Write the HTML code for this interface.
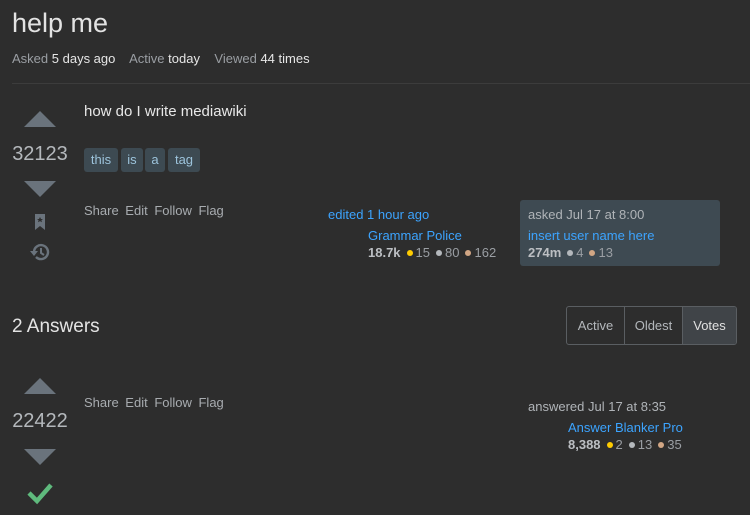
<!DOCTYPE html>
<html><head><style>
body{margin:0;width:750px;height:515px;background:#2d2d2d;font-family:"Liberation Sans",sans-serif;position:relative;overflow:hidden;color:#e8e8e8}
.a{position:absolute;white-space:nowrap}
.up{width:0;height:0;border-left:16px solid transparent;border-right:16px solid transparent;border-bottom:16px solid #6a737c}
.dn{width:0;height:0;border-left:16px solid transparent;border-right:16px solid transparent;border-top:16px solid #6a737c}
.num{font-size:20px;color:#b4b8bc;width:80px;text-align:center}
.g{color:#9a9ea3}
.l{color:#3ca4ff}
.tag{position:absolute;top:148px;height:24px;line-height:24px;background:#3d4a52;color:#9cc3db;font-size:13px;text-align:center;border-radius:3px}
.act{font-size:13px;color:#a8acb0;word-spacing:3px}
.rep{font-size:13px;color:#9a9ea3}
.rep b{color:#bcbfc3}
.d{display:inline-block;width:6px;height:6px;border-radius:50%;margin:0 3px 1px 6px}
</style></head><body>
<div class="a" style="left:12px;top:8px;font-size:27px;color:#e3e3e3">help me</div>
<div class="a" style="left:12px;top:51px;font-size:13px"><span class="g">Asked</span> <span style="color:#e6e6e6">5 days ago</span>&nbsp;&nbsp;&nbsp; <span class="g">Active</span> <span style="color:#e6e6e6">today</span>&nbsp;&nbsp;&nbsp; <span class="g">Viewed</span> <span style="color:#e6e6e6">44 times</span></div>
<div class="a" style="left:12px;top:83px;width:738px;height:1px;background:#3c3c3c"></div>

<div class="a up" style="left:24px;top:111px"></div>
<div class="a num" style="left:0;top:143px">32123</div>
<div class="a dn" style="left:24px;top:181px"></div>
<svg class="a" style="left:33px;top:213px" width="14" height="18" viewBox="0 0 14 18"><path d="M2 1h10v16l-5-4-5 4z" fill="#6a737c"/><path d="M7 4l1 2h2l-1.6 1.3.6 2-2-1.2-2 1.2.6-2L4 6h2z" fill="#2d2d2d"/></svg>
<svg class="a" style="left:29px;top:242px" width="22" height="20" viewBox="0 0 22 20"><path d="M5 10a7 7 0 1 1 2 5" stroke="#6a737c" stroke-width="2.4" fill="none"/><path d="M1 9h8l-4 5z" fill="#6a737c"/><path d="M12 6v5l3 2" stroke="#6a737c" stroke-width="2" fill="none"/></svg>

<div class="a" style="left:84px;top:103px;font-size:15px">how do I write mediawiki</div>
<div class="tag" style="left:84px;width:34px">this</div>
<div class="tag" style="left:121px;width:22px">is</div>
<div class="tag" style="left:145px;width:20px">a</div>
<div class="tag" style="left:168px;width:32px">tag</div>
<div class="a act" style="left:84px;top:203px">Share Edit Follow Flag</div>

<div class="a l" style="left:328px;top:207px;font-size:13px">edited 1 hour ago</div>
<div class="a l" style="left:368px;top:228px;font-size:13px">Grammar Police</div>
<div class="a rep" style="left:368px;top:245px"><b>18.7k</b><span class="d" style="background:#ffcc01"></span>15<span class="d" style="background:#b4b8bc"></span>80<span class="d" style="background:#d1a684"></span>162</div>

<div class="a" style="left:520px;top:200px;width:200px;height:66px;background:#3e4a52;border-radius:3px"></div>
<div class="a g" style="left:528px;top:207px;font-size:13px;color:#b0b4b8">asked Jul 17 at 8:00</div>
<div class="a l" style="left:528px;top:228px;font-size:13px">insert user name here</div>
<div class="a rep" style="left:528px;top:245px"><b>274m</b><span class="d" style="background:#b4b8bc"></span>4<span class="d" style="background:#d1a684"></span>13</div>

<div class="a" style="left:12px;top:316px;font-size:19px;color:#e3e3e3">2 Answers</div>
<div class="a" style="left:566px;top:306px;width:169px;height:37px;border:1px solid #5a5e62;border-radius:3px;display:flex;font-size:13px;color:#b4b8bc;overflow:hidden">
<div style="width:57px;line-height:37px;text-align:center;border-right:1px solid #5a5e62">Active</div>
<div style="width:57px;line-height:37px;text-align:center;border-right:1px solid #5a5e62">Oldest</div>
<div style="flex:1;line-height:37px;text-align:center;background:#404448;color:#e0e0e0">Votes</div>
</div>

<div class="a up" style="left:24px;top:378px"></div>
<div class="a num" style="left:0;top:410px">22422</div>
<div class="a dn" style="left:24px;top:449px"></div>
<svg class="a" style="left:27px;top:481px" width="26" height="24" viewBox="0 0 26 24"><path d="M2 12l8 8L24 4" stroke="#5fba7d" stroke-width="4.5" fill="none"/></svg>
<div class="a act" style="left:84px;top:395px">Share Edit Follow Flag</div>

<div class="a" style="left:528px;top:399px;font-size:13px;color:#b0b4b8">answered Jul 17 at 8:35</div>
<div class="a l" style="left:568px;top:420px;font-size:13px">Answer Blanker Pro</div>
<div class="a rep" style="left:568px;top:437px"><b>8,388</b><span class="d" style="background:#ffcc01"></span>2<span class="d" style="background:#b4b8bc"></span>13<span class="d" style="background:#d1a684"></span>35</div>
</body></html>
